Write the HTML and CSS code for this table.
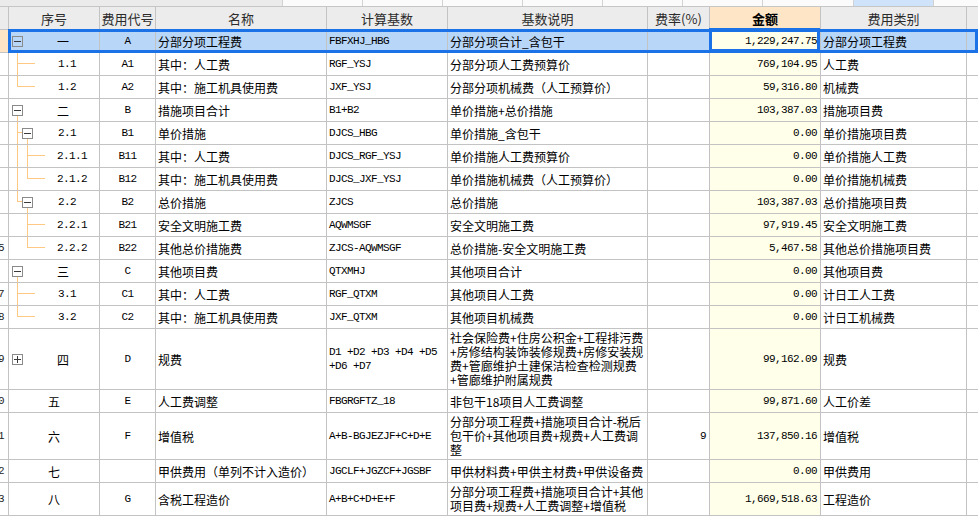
FILE: index.html
```html
<!DOCTYPE html>
<html lang="zh-CN">
<head>
<meta charset="utf-8">
<title>费用汇总</title>
<link rel="stylesheet" href="styles.css">
</head>
<body>
<div class="topbar">
  <div class="blank"></div>
  <div class="tab"></div><div class="tab"></div><div class="tab"></div><div class="tab"></div><div class="tab"></div><div class="tab"></div>
  <div class="tab w91"></div>
  <div class="tab on"></div>
  <div class="tab rest"></div>
</div>

<div class="sheet">
  <div class="row head">
    <div class="c stub"></div>
    <div class="c">序号</div>
    <div class="c">费用代号</div>
    <div class="c">名称</div>
    <div class="c">计算基数</div>
    <div class="c">基数说明</div>
    <div class="c">费率(%)</div>
    <div class="c amt-h">金额</div>
    <div class="c">费用类别</div>
    <div class="c last"></div>
  </div>

  <div class="row sel">
    <div class="c stub"></div>
    <div class="c seq lv0t"><span class="box minus"></span><span class="lbl">一</span></div>
    <div class="c code m">A</div>
    <div class="c">分部分项工程费</div>
    <div class="c m">FBFXHJ_HBG</div>
    <div class="c">分部分项合计_含包干</div>
    <div class="c rate m"></div>
    <div class="c num m focus">1,229,247.75</div>
    <div class="c">分部分项工程费</div>
    <div class="c last"></div>
  </div>

  <div class="row">
    <div class="c stub"></div>
    <div class="c seq lv1m"><span class="lbl m i26">1.1</span></div>
    <div class="c code m">A1</div>
    <div class="c">其中：人工费</div>
    <div class="c m">RGF_YSJ</div>
    <div class="c">分部分项人工费预算价</div>
    <div class="c rate m"></div>
    <div class="c num m">769,104.95</div>
    <div class="c">人工费</div>
    <div class="c last"></div>
  </div>

  <div class="row">
    <div class="c stub"></div>
    <div class="c seq lv1e"><span class="lbl m i26">1.2</span></div>
    <div class="c code m">A2</div>
    <div class="c">其中：施工机具使用费</div>
    <div class="c m">JXF_YSJ</div>
    <div class="c">分部分项机械费（人工预算价）</div>
    <div class="c rate m"></div>
    <div class="c num m">59,316.80</div>
    <div class="c">机械费</div>
    <div class="c last"></div>
  </div>

  <div class="row">
    <div class="c stub"></div>
    <div class="c seq lv0t"><span class="box minus"></span><span class="lbl">二</span></div>
    <div class="c code m">B</div>
    <div class="c">措施项目合计</div>
    <div class="c m">B1+B2</div>
    <div class="c">单价措施+总价措施</div>
    <div class="c rate m"></div>
    <div class="c num m">103,387.03</div>
    <div class="c">措施项目费</div>
    <div class="c last"></div>
  </div>

  <div class="row">
    <div class="c stub"></div>
    <div class="c seq lv1tm"><span class="box minus b1"></span><span class="lbl m i2">2.1</span></div>
    <div class="c code m">B1</div>
    <div class="c">单价措施</div>
    <div class="c m">DJCS_HBG</div>
    <div class="c">单价措施_含包干</div>
    <div class="c rate m"></div>
    <div class="c num m">0.00</div>
    <div class="c">单价措施项目费</div>
    <div class="c last"></div>
  </div>

  <div class="row">
    <div class="c stub"></div>
    <div class="c seq lv2mc"><span class="lbl m i36">2.1.1</span></div>
    <div class="c code m">B11</div>
    <div class="c">其中：人工费</div>
    <div class="c m">DJCS_RGF_YSJ</div>
    <div class="c">单价措施人工费预算价</div>
    <div class="c rate m"></div>
    <div class="c num m">0.00</div>
    <div class="c">单价措施人工费</div>
    <div class="c last"></div>
  </div>

  <div class="row">
    <div class="c stub"></div>
    <div class="c seq lv2ec"><span class="lbl m i36">2.1.2</span></div>
    <div class="c code m">B12</div>
    <div class="c">其中：施工机具使用费</div>
    <div class="c m">DJCS_JXF_YSJ</div>
    <div class="c">单价措施机械费（人工预算价）</div>
    <div class="c rate m"></div>
    <div class="c num m">0.00</div>
    <div class="c">单价措施机械费</div>
    <div class="c last"></div>
  </div>

  <div class="row">
    <div class="c stub"></div>
    <div class="c seq lv1te"><span class="box minus b1"></span><span class="lbl m i2">2.2</span></div>
    <div class="c code m">B2</div>
    <div class="c">总价措施</div>
    <div class="c m">ZJCS</div>
    <div class="c">总价措施</div>
    <div class="c rate m"></div>
    <div class="c num m">103,387.03</div>
    <div class="c">总价措施项目费</div>
    <div class="c last"></div>
  </div>

  <div class="row">
    <div class="c stub"></div>
    <div class="c seq lv2m"><span class="lbl m i36">2.2.1</span></div>
    <div class="c code m">B21</div>
    <div class="c">安全文明施工费</div>
    <div class="c m">AQWMSGF</div>
    <div class="c">安全文明施工费</div>
    <div class="c rate m"></div>
    <div class="c num m">97,919.45</div>
    <div class="c">安全文明施工费</div>
    <div class="c last"></div>
  </div>

  <div class="row">
    <div class="c stub m">15</div>
    <div class="c seq lv2e"><span class="lbl m i36">2.2.2</span></div>
    <div class="c code m">B22</div>
    <div class="c">其他总价措施费</div>
    <div class="c m">ZJCS-AQWMSGF</div>
    <div class="c">总价措施-安全文明施工费</div>
    <div class="c rate m"></div>
    <div class="c num m">5,467.58</div>
    <div class="c">其他总价措施项目费</div>
    <div class="c last"></div>
  </div>

  <div class="row">
    <div class="c stub"></div>
    <div class="c seq lv0t"><span class="box minus"></span><span class="lbl">三</span></div>
    <div class="c code m">C</div>
    <div class="c">其他项目费</div>
    <div class="c m">QTXMHJ</div>
    <div class="c">其他项目合计</div>
    <div class="c rate m"></div>
    <div class="c num m">0.00</div>
    <div class="c">其他项目费</div>
    <div class="c last"></div>
  </div>

  <div class="row">
    <div class="c stub m">17</div>
    <div class="c seq lv1m"><span class="lbl m i26">3.1</span></div>
    <div class="c code m">C1</div>
    <div class="c">其中：人工费</div>
    <div class="c m">RGF_QTXM</div>
    <div class="c">其他项目人工费</div>
    <div class="c rate m"></div>
    <div class="c num m">0.00</div>
    <div class="c">计日工人工费</div>
    <div class="c last"></div>
  </div>

  <div class="row">
    <div class="c stub m">18</div>
    <div class="c seq lv1e"><span class="lbl m i26">3.2</span></div>
    <div class="c code m">C2</div>
    <div class="c">其中：施工机具使用费</div>
    <div class="c m">JXF_QTXM</div>
    <div class="c">其他项目机械费</div>
    <div class="c rate m"></div>
    <div class="c num m">0.00</div>
    <div class="c">计日工机械费</div>
    <div class="c last"></div>
  </div>

  <div class="row h61">
    <div class="c stub m">19</div>
    <div class="c seq"><span class="box plus"></span><span class="lbl">四</span></div>
    <div class="c code m">D</div>
    <div class="c">规费</div>
    <div class="c m multi">D1 +D2 +D3 +D4 +D5<br>+D6 +D7</div>
    <div class="c multi">社会保险费+住房公积金+工程排污费<br>+房修结构装饰装修规费+房修安装规<br>费+管廊维护土建保洁检查检测规费<br>+管廊维护附属规费</div>
    <div class="c rate m"></div>
    <div class="c num m">99,162.09</div>
    <div class="c">规费</div>
    <div class="c last"></div>
  </div>

  <div class="row">
    <div class="c stub m">20</div>
    <div class="c seq"><span class="lbl">五</span></div>
    <div class="c code m">E</div>
    <div class="c">人工费调整</div>
    <div class="c m">FBGRGFTZ_18</div>
    <div class="c">非包干18项目人工费调整</div>
    <div class="c rate m"></div>
    <div class="c num m">99,871.60</div>
    <div class="c">人工价差</div>
    <div class="c last"></div>
  </div>

  <div class="row h47">
    <div class="c stub m">21</div>
    <div class="c seq"><span class="lbl">六</span></div>
    <div class="c code m">F</div>
    <div class="c">增值税</div>
    <div class="c m">A+B-BGJEZJF+C+D+E</div>
    <div class="c multi">分部分项工程费+措施项目合计-税后<br>包干价+其他项目费+规费+人工费调<br>整</div>
    <div class="c rate m">9</div>
    <div class="c num m">137,850.16</div>
    <div class="c">增值税</div>
    <div class="c last"></div>
  </div>

  <div class="row">
    <div class="c stub m">22</div>
    <div class="c seq"><span class="lbl">七</span></div>
    <div class="c code m"></div>
    <div class="c">甲供费用（单列不计入造价）</div>
    <div class="c m">JGCLF+JGZCF+JGSBF</div>
    <div class="c">甲供材料费+甲供主材费+甲供设备费</div>
    <div class="c rate m"></div>
    <div class="c num m">0.00</div>
    <div class="c">甲供费用</div>
    <div class="c last"></div>
  </div>

  <div class="row h33">
    <div class="c stub m">23</div>
    <div class="c seq"><span class="lbl">八</span></div>
    <div class="c code m">G</div>
    <div class="c">含税工程造价</div>
    <div class="c m">A+B+C+D+E+F</div>
    <div class="c multi">分部分项工程费+措施项目合计+其他<br>项目费+规费+人工费调整+增值税</div>
    <div class="c rate m"></div>
    <div class="c num m">1,669,518.63</div>
    <div class="c">工程造价</div>
    <div class="c last"></div>
  </div>
</div>
</body>
</html>
```

FILE: styles.css
```css
* { box-sizing: border-box; }

body {
  margin: 0;
  width: 978px;
  height: 521px;
  overflow: hidden;
  background: #ffffff;
  font-family: "Noto Sans CJK SC", "Noto Sans", sans-serif;
  font-size: 12px;
  color: #000;
}

/* thin strip of the neighbouring pane above the table */
.topbar {
  display: flex;
  height: 7px;
  border-bottom: 1px solid #c6c6c6;
}
.topbar .blank {
  width: 283px;
  background: #ebebeb;
  border-right: 1px solid #d2d2d2;
}
.topbar .tab {
  width: 80px;
  background: #fbfbfb;
  border-right: 1px solid #d2d2d2;
}
.topbar .tab.w91 { width: 91px; }
.topbar .tab.on { background: #cfe4fb; }
.topbar .tab.rest { flex: 1; border-right: 0; }

/* grid */
.row {
  display: grid;
  grid-template-columns: 9px 91px 56px 171px 121px 200px 62px 111px 146px 11px;
  height: 23px;
}
.row.h61 { height: 61px; }
.row.h47 { height: 47px; }
.row.h33 { height: 33px; }

.c {
  display: flex;
  align-items: center;
  padding: 0 2px;
  border-right: 1px solid #c3c3c3;
  border-bottom: 1px solid #c3c3c3;
  white-space: nowrap;
  overflow: hidden;
}
.c.last { border-right: 0; }

.m {
  font-family: "Liberation Mono", "DejaVu Sans Mono", monospace;
  font-size: 11px;
  letter-spacing: -0.6px;
}

.multi { line-height: 14px; }

/* header */
.head .c {
  justify-content: center;
  background: #ececec;
  font-size: 13px;
  color: #2b2b2b;
}
.head .c.amt-h {
  background: #fde5c6;
  font-weight: bold;
  color: #000;
}

/* row-number stub (mostly scrolled out of view) */
.stub {
  padding: 0 4px 0 0;
  justify-content: flex-end;
  color: #222;
}

.code { justify-content: center; }
.rate { justify-content: flex-end; padding-right: 3px; }
.num {
  justify-content: flex-end;
  padding-right: 3px;
  background: #ffffea;
}

/* selected row */
.sel { position: relative; }
.sel .c { background: #b7d6f8; }
.sel .c.stub { background: #fde5c6; }
.sel .c.num { background: #ffffea; }
.sel::after {
  content: "";
  position: absolute;
  left: 8px;
  top: -1px;
  right: 0;
  bottom: 0;
  border: 3px solid #1a72e6;
  pointer-events: none;
}
.focus { position: relative; overflow: visible; }
.focus::after {
  content: "";
  position: absolute;
  left: -1px;
  top: -2px;
  right: 0;
  bottom: 0;
  border: 3px solid #1a72e6;
  pointer-events: none;
}

/* tree column */
.seq {
  --tc: #ffc983;
  padding: 0;
}
.seq .lbl {
  flex: 1;
  text-align: center;
}
.seq .lbl.i26 { margin-left: 26px; }
.seq .lbl.i36 { margin-left: 36px; }
.seq .lbl.i2 { margin-left: 2px; }

.box {
  width: 11px;
  height: 11px;
  margin-left: 3px;
  margin-right: 4px;
  border: 1px solid #8a8a8a;
  flex: none;
}
.box.b1 { margin-left: 13px; margin-right: 0; }
.box.minus {
  background: linear-gradient(#3a3a3a, #3a3a3a) 1px 4px / 7px 1px no-repeat;
}
.box.plus {
  background:
    linear-gradient(#3a3a3a, #3a3a3a) 1px 4px / 7px 1px no-repeat,
    linear-gradient(#3a3a3a, #3a3a3a) 4px 1px / 1px 7px no-repeat;
}

/* connector lines, drawn as background strokes */
.lv0t {
  background: linear-gradient(var(--tc), var(--tc)) 8px 16px / 1px 6px no-repeat;
}
.lv1m {
  background:
    linear-gradient(var(--tc), var(--tc)) 8px 0 / 1px 100% no-repeat,
    linear-gradient(var(--tc), var(--tc)) 8px 10px / 18px 1px no-repeat;
}
.lv1e {
  background:
    linear-gradient(var(--tc), var(--tc)) 8px 0 / 1px 11px no-repeat,
    linear-gradient(var(--tc), var(--tc)) 8px 10px / 18px 1px no-repeat;
}
.lv1tm {
  background:
    linear-gradient(var(--tc), var(--tc)) 8px 0 / 1px 100% no-repeat,
    linear-gradient(var(--tc), var(--tc)) 8px 10px / 5px 1px no-repeat,
    linear-gradient(var(--tc), var(--tc)) 18px 16px / 1px 6px no-repeat;
}
.lv1te {
  background:
    linear-gradient(var(--tc), var(--tc)) 8px 0 / 1px 11px no-repeat,
    linear-gradient(var(--tc), var(--tc)) 8px 10px / 5px 1px no-repeat,
    linear-gradient(var(--tc), var(--tc)) 18px 16px / 1px 6px no-repeat;
}
.lv2mc {
  background:
    linear-gradient(var(--tc), var(--tc)) 8px 0 / 1px 100% no-repeat,
    linear-gradient(var(--tc), var(--tc)) 18px 0 / 1px 100% no-repeat,
    linear-gradient(var(--tc), var(--tc)) 18px 10px / 18px 1px no-repeat;
}
.lv2ec {
  background:
    linear-gradient(var(--tc), var(--tc)) 8px 0 / 1px 100% no-repeat,
    linear-gradient(var(--tc), var(--tc)) 18px 0 / 1px 11px no-repeat,
    linear-gradient(var(--tc), var(--tc)) 18px 10px / 18px 1px no-repeat;
}
.lv2m {
  background:
    linear-gradient(var(--tc), var(--tc)) 18px 0 / 1px 100% no-repeat,
    linear-gradient(var(--tc), var(--tc)) 18px 10px / 18px 1px no-repeat;
}
.lv2e {
  background:
    linear-gradient(var(--tc), var(--tc)) 18px 0 / 1px 11px no-repeat,
    linear-gradient(var(--tc), var(--tc)) 18px 10px / 18px 1px no-repeat;
}
```
